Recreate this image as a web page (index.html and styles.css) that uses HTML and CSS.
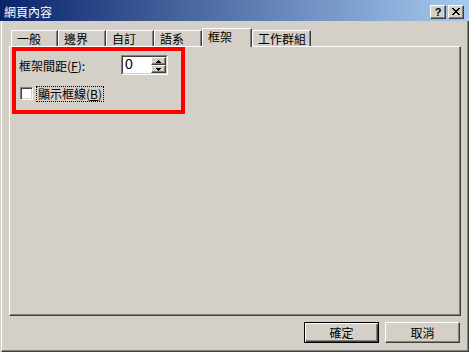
FILE: index.html
```html
<!DOCTYPE html>
<html lang="zh-Hant">
<head>
<meta charset="utf-8">
<title>網頁內容</title>
<link rel="stylesheet" href="styles.css">
</head>
<body>
<div class="window">
  <div class="titlebar">
    <span class="title">網頁內容</span>
    <div class="caption-buttons">
      <div class="cap-btn help">?</div>
      <div class="cap-btn close">
        <svg width="8" height="7" viewBox="0 0 8 7" shape-rendering="crispEdges"><path fill="#000" d="M0 0h2v1H0zM6 0h2v1H6zM1 1h2v1H1zM5 1h2v1H5zM2 2h4v1H2zM3 3h2v1H3zM2 4h4v1H2zM1 5h2v1H1zM5 5h2v1H5zM0 6h2v1H0zM6 6h2v1H6z"/></svg>
      </div>
    </div>
  </div>
  <div class="client">
    <div class="tabs">
      <div class="tab w47">一般</div>
      <div class="tab w48">邊界</div>
      <div class="tab w48">自訂</div>
      <div class="tab w48">語系</div>
      <div class="tab active w50">框架</div>
      <div class="tab w59">工作群組</div>
    </div>
    <div class="panel">
      <div class="row spin-row">
        <span class="field-label">框架間距(<u>F</u>):</span>
        <div class="spinner">
          <div class="spinner-inner">
            <span class="spin-value">0</span>
            <div class="spin-arrows">
              <div class="spin-btn"><svg width="5" height="3" viewBox="0 0 5 3" shape-rendering="crispEdges"><path fill="#000" d="M2 0h1v1H2zM1 1h3v1H1zM0 2h5v1H0z"/></svg></div>
              <div class="spin-btn"><svg width="5" height="3" viewBox="0 0 5 3" shape-rendering="crispEdges"><path fill="#000" d="M0 0h5v1H0zM1 1h3v1H1zM2 2h1v1H2z"/></svg></div>
            </div>
          </div>
        </div>
      </div>
      <div class="row check-row">
        <span class="checkbox"></span>
        <span class="check-label">顯示框線(<u>B</u>)</span>
      </div>
    </div>
    <div class="actions">
      <div class="btn default">確定</div>
      <div class="btn">取消</div>
    </div>
  </div>
  <div class="annotation"></div>
</div>
</body>
</html>
```

FILE: styles.css
```css
* { box-sizing: border-box; }
html, body { margin: 0; padding: 0; }
body {
  width: 469px;
  height: 352px;
  overflow: hidden;
  background: #d4d0c8;
  font-family: "Noto Sans CJK TC", "Noto Sans CJK SC", "Liberation Sans", sans-serif;
  font-size: 12px;
  color: #000;
}
.window {
  position: relative;
  width: 469px;
  height: 352px;
  display: flex;
  flex-direction: column;
  background: #d4d0c8;
}
.titlebar {
  flex: none;
  height: 21px;
  display: flex;
  align-items: flex-start;
  background: linear-gradient(to right, #0a246a, #a6caf0);
  color: #fff;
}
.title {
  flex: 1;
  padding: 2px 0 0 4px;
  line-height: 19px;
  font-size: 12px;
}
.caption-buttons {
  display: flex;
  gap: 2px;
  margin: 5px 5px 0 0;
}
.cap-btn {
  width: 16px;
  height: 14px;
  background: #d4d0c8;
  border: 1px solid;
  border-color: #fff #404040 #404040 #fff;
  box-shadow: inset -1px -1px #808080;
  display: flex;
  align-items: center;
  justify-content: center;
  color: #000;
}
.cap-btn.help {
  font-family: "Liberation Sans", sans-serif;
  font-weight: bold;
  font-size: 11px;
  line-height: 12px;
  padding-bottom: 1px;
}
.cap-btn.close svg { margin-bottom: 1px; }
.client {
  flex: 1;
  display: flex;
  flex-direction: column;
  margin-left: 1px;
  border-left: 1px solid #fff;
  border-right: 1px solid #404040;
  border-bottom: 1px solid #404040;
  box-shadow: inset -1px 0 #808080, inset 0 -1px #808080;
  padding-top: 7px;
}
.tabs {
  display: flex;
  align-items: flex-end;
  height: 18px;
  margin-left: 9px;
}
.tab {
  height: 16px;
  border-left: 1px solid #fff;
  border-top: 1px solid #fff;
  border-right: 1px solid #404040;
  box-shadow: inset -1px 0 #808080;
  padding-left: 5px;
  line-height: 16px;
  white-space: nowrap;
  background: #d4d0c8;
}
.tab.active {
  position: relative;
  z-index: 1;
  height: 19px;
  margin-bottom: -1px;
  line-height: 16px;
}
.w47 { width: 47px; }
.w48 { width: 48px; }
.w50 { width: 50px; }
.w59 { width: 59px; }
.panel {
  margin-left: 7px;
  width: 452px;
  height: 270px;
  flex: none;
  border: 1px solid;
  border-color: #fff #404040 #404040 #fff;
  box-shadow: inset -1px -1px #808080;
  padding: 8px 0 0 9px;
}
.row {
  display: flex;
  align-items: center;
}
.spin-row { height: 20px; }
.field-label {
  width: 102px;
  white-space: nowrap;
}
.spinner {
  width: 47px;
  height: 20px;
  border: 1px solid;
  border-color: #808080 #fff #fff #808080;
}
.spinner-inner {
  height: 100%;
  display: flex;
  background: #fff;
  border: 1px solid;
  border-color: #404040 #d4d0c8 #d4d0c8 #404040;
}
.spin-value {
  flex: 1;
  padding-left: 2px;
  font-family: "Liberation Sans", sans-serif;
  font-size: 14px;
  line-height: 15px;
}
.spin-arrows {
  width: 15px;
  display: flex;
  flex-direction: column;
}
.spin-btn {
  flex: 1;
  background: #d4d0c8;
  border: 1px solid;
  border-color: #fff #404040 #404040 #fff;
  box-shadow: inset -1px -1px #808080;
  display: flex;
  align-items: center;
  justify-content: center;
}
.check-row {
  height: 16px;
  margin-top: 11px;
  margin-left: 1px;
  align-items: flex-start;
}
.checkbox {
  width: 13px;
  height: 13px;
  margin-top: 1px;
  background: #fff;
  border: 1px solid;
  border-color: #808080 #fff #fff #808080;
  box-shadow: inset 1px 1px #404040, inset -1px -1px #d4d0c8;
}
.check-label {
  margin-left: 3px;
  height: 16px;
  border: 1px dotted #000;
  padding: 0 1px;
  line-height: 14px;
  white-space: nowrap;
}
.actions {
  display: flex;
  justify-content: flex-end;
  gap: 6px;
  margin: 6px 0 0 7px;
  width: 451px;
}
.btn {
  width: 75px;
  height: 21px;
  border: 1px solid;
  border-color: #fff #404040 #404040 #fff;
  box-shadow: inset -1px -1px #808080;
  display: flex;
  align-items: center;
  justify-content: center;
  line-height: 17px;
}
.btn.default {
  border-color: #000;
  box-shadow: inset 1px 1px #fff, inset -1px -1px #404040, inset -2px -2px #808080;
}
.annotation {
  position: absolute;
  left: 12px;
  top: 47px;
  width: 173px;
  height: 67px;
  border: 4px solid #ff0000;
  z-index: 5;
  pointer-events: none;
}
```
